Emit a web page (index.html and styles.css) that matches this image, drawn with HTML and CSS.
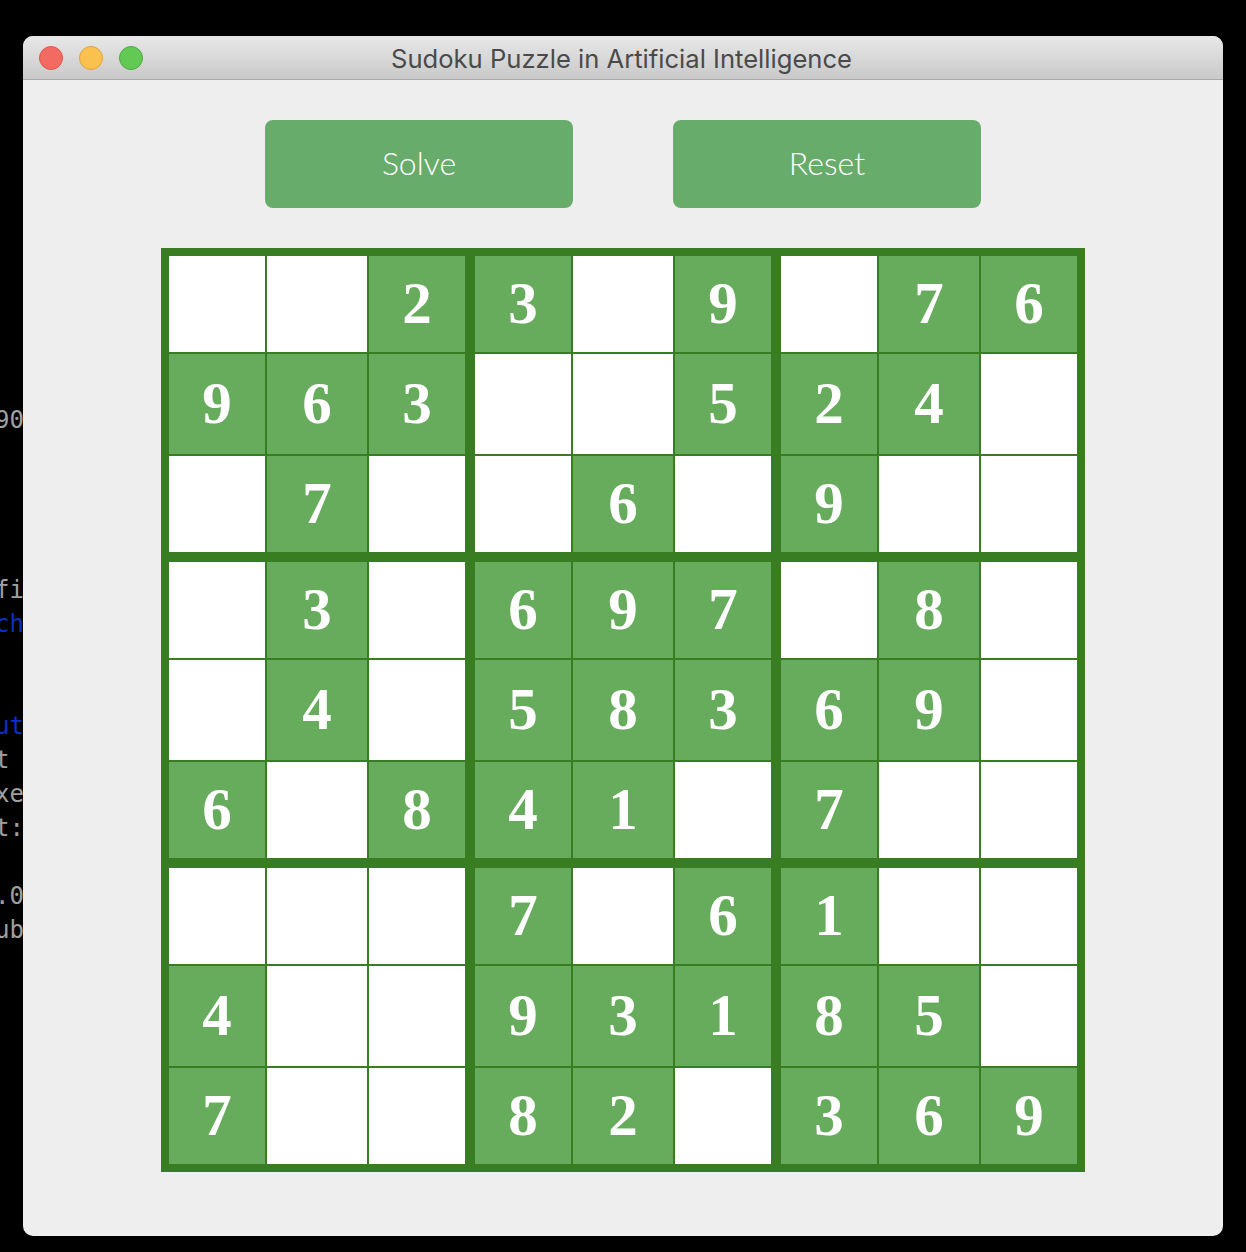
FILE: index.html
```html
<!DOCTYPE html>
<html lang="en">
<head>
    <meta charset="UTF-8">
    <title>Sudoku Puzzle in Artificial Intelligence</title>
    <link rel="stylesheet" href="styles.css">
</head>
<body>
    <div class="terminal">
        <div class="term-line">90</div>
        <div class="term-line"></div>
        <div class="term-line"></div>
        <div class="term-line"></div>
        <div class="term-line"></div>
        <div class="term-line">fi</div>
        <div class="term-line term-blue">ch</div>
        <div class="term-line"></div>
        <div class="term-line"></div>
        <div class="term-line term-blue">ut</div>
        <div class="term-line">t&nbsp;</div>
        <div class="term-line">xe</div>
        <div class="term-line">t:</div>
        <div class="term-line"></div>
        <div class="term-line">.0</div>
        <div class="term-line">ub</div>
    </div>

    <div class="window">
        <div class="titlebar">
            <div class="lights">
                <span class="light light-red"></span>
                <span class="light light-yellow"></span>
                <span class="light light-green"></span>
            </div>
            <div class="title">Sudoku Puzzle in Artificial Intelligence</div>
        </div>

        <div class="content">
            <div class="buttons">
                <button class="btn">Solve</button>
                <button class="btn">Reset</button>
            </div>

            <div class="board">
                <div class="box">
                    <div class="cell"></div><div class="cell"></div><div class="cell filled">2</div>
                    <div class="cell filled">9</div><div class="cell filled">6</div><div class="cell filled">3</div>
                    <div class="cell"></div><div class="cell filled">7</div><div class="cell"></div>
                </div>
                <div class="box">
                    <div class="cell filled">3</div><div class="cell"></div><div class="cell filled">9</div>
                    <div class="cell"></div><div class="cell"></div><div class="cell filled">5</div>
                    <div class="cell"></div><div class="cell filled">6</div><div class="cell"></div>
                </div>
                <div class="box">
                    <div class="cell"></div><div class="cell filled">7</div><div class="cell filled">6</div>
                    <div class="cell filled">2</div><div class="cell filled">4</div><div class="cell"></div>
                    <div class="cell filled">9</div><div class="cell"></div><div class="cell"></div>
                </div>
                <div class="box">
                    <div class="cell"></div><div class="cell filled">3</div><div class="cell"></div>
                    <div class="cell"></div><div class="cell filled">4</div><div class="cell"></div>
                    <div class="cell filled">6</div><div class="cell"></div><div class="cell filled">8</div>
                </div>
                <div class="box">
                    <div class="cell filled">6</div><div class="cell filled">9</div><div class="cell filled">7</div>
                    <div class="cell filled">5</div><div class="cell filled">8</div><div class="cell filled">3</div>
                    <div class="cell filled">4</div><div class="cell filled">1</div><div class="cell"></div>
                </div>
                <div class="box">
                    <div class="cell"></div><div class="cell filled">8</div><div class="cell"></div>
                    <div class="cell filled">6</div><div class="cell filled">9</div><div class="cell"></div>
                    <div class="cell filled">7</div><div class="cell"></div><div class="cell"></div>
                </div>
                <div class="box">
                    <div class="cell"></div><div class="cell"></div><div class="cell"></div>
                    <div class="cell filled">4</div><div class="cell"></div><div class="cell"></div>
                    <div class="cell filled">7</div><div class="cell"></div><div class="cell"></div>
                </div>
                <div class="box">
                    <div class="cell filled">7</div><div class="cell"></div><div class="cell filled">6</div>
                    <div class="cell filled">9</div><div class="cell filled">3</div><div class="cell filled">1</div>
                    <div class="cell filled">8</div><div class="cell filled">2</div><div class="cell"></div>
                </div>
                <div class="box">
                    <div class="cell filled">1</div><div class="cell"></div><div class="cell"></div>
                    <div class="cell filled">8</div><div class="cell filled">5</div><div class="cell"></div>
                    <div class="cell filled">3</div><div class="cell filled">6</div><div class="cell filled">9</div>
                </div>
            </div>
        </div>
    </div>
</body>
</html>
```

FILE: styles.css
```css
body {
    display: flex;
    align-items: flex-start;
    height: 1252px;
    margin: 0;
    padding: 0;
    overflow: hidden;
    background-color: #000;
}

.terminal {
    width: 23px;
    flex-shrink: 0;
    padding-top: 403px;
    overflow: hidden;
    font-family: "DejaVu Sans Mono", monospace;
    font-size: 24px;
    color: #a0a0a0;
}

.term-line {
    display: flex;
    justify-content: flex-end;
    align-items: center;
    width: 24px;
    height: 34px;
    white-space: nowrap;
}

.term-blue {
    color: #0b2fc4;
}

.window {
    width: 1200px;
    height: 1200px;
    margin-top: 36px;
    border-radius: 10px;
    overflow: hidden;
    background-color: #eee;
}

.titlebar {
    display: flex;
    align-items: center;
    justify-content: center;
    position: relative;
    box-sizing: border-box;
    height: 44px;
    padding: 2px 3px 0 0;
    border-bottom: 1px solid #a9a9a9;
    background: linear-gradient(#e8e8e8, #c9c9c9);
}

.lights {
    display: flex;
    gap: 16px;
    position: absolute;
    left: 16px;
    top: 10px;
}

.light {
    box-sizing: border-box;
    width: 24px;
    height: 24px;
    border-radius: 50%;
    border: 1px solid;
}

.light-red {
    background-color: #f36a62;
    border-color: #dc564e;
}

.light-yellow {
    background-color: #fbc14f;
    border-color: #e0a23a;
}

.light-green {
    background-color: #61c954;
    border-color: #4ea942;
}

.title {
    font-family: Inter, "Liberation Sans", sans-serif;
    font-size: 25.6px;
    color: #4a4a4a;
}

.content {
    display: flex;
    flex-direction: column;
    align-items: center;
    gap: 40px;
    padding-top: 40px;
}

.buttons {
    display: flex;
    gap: 100px;
}

.btn {
    width: 308px;
    height: 88px;
    padding: 0 0 4px;
    border: none;
    border-radius: 8px;
    background-color: #68ac6c;
    font-family: Lato, sans-serif;
    font-weight: 300;
    font-size: 32px;
    color: #fff;
}

.board {
    display: grid;
    grid-template-columns: repeat(3, 296px);
    gap: 10px;
    border: 8px solid #387d22;
    background-color: #387d22;
}

.box {
    display: grid;
    grid-template-columns: 96px 100px 96px;
    grid-template-rows: 96px 100px 96px;
    gap: 2px;
}

.cell {
    display: flex;
    align-items: center;
    justify-content: center;
    padding-bottom: 1px;
    box-sizing: border-box;
    background-color: #fff;
    font-family: "Liberation Serif", "Times New Roman", serif;
    font-weight: bold;
    font-size: 59px;
    color: #fff;
}

.filled {
    background-color: #67ac5c;
}
```
